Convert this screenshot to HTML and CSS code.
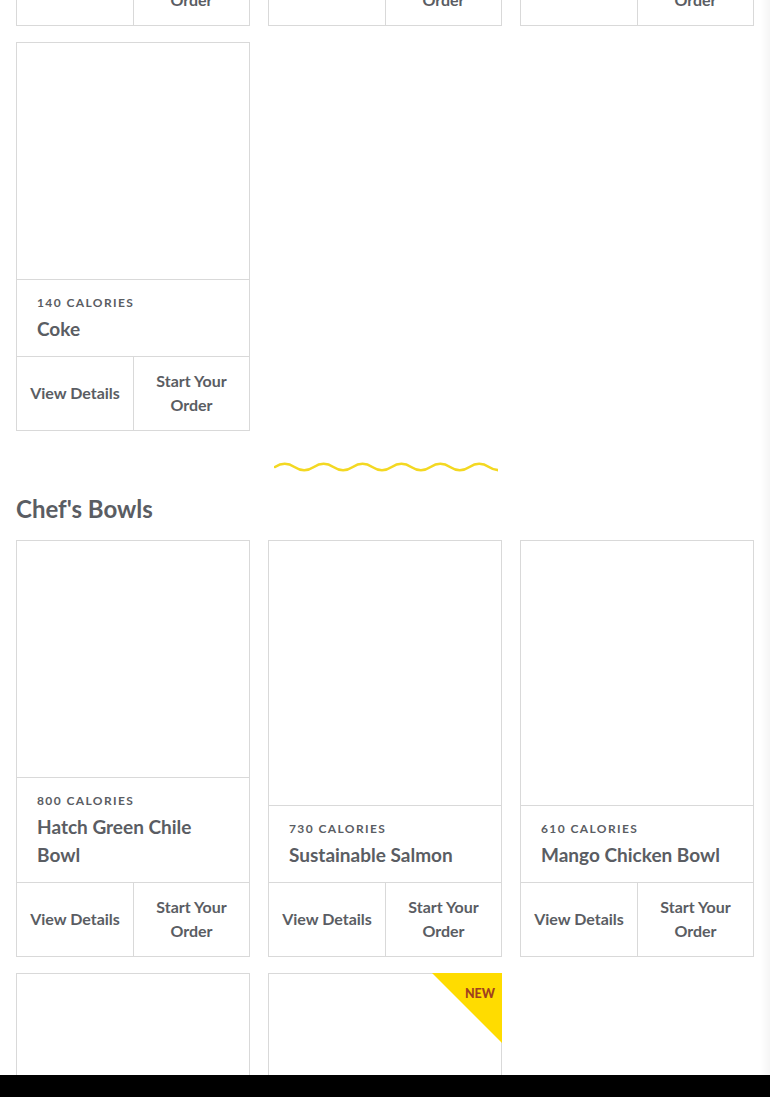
FILE: index.html
```html
<!DOCTYPE html>
<html lang="en">
<head>
<meta charset="utf-8">
<title>Menu</title>
<link rel="stylesheet" href="styles.css">
</head>
<body>
<main class="menu">
  <section class="category category-drinks">
    <div class="grid">
      <article class="card">
        <div class="card-image"></div>
        <div class="card-info"><div class="cal">150 CALORIES</div><h3 class="name">Sprite</h3></div>
        <div class="card-actions"><a class="btn">View Details</a><a class="btn">Start Your Order</a></div>
      </article>
      <article class="card">
        <div class="card-image"></div>
        <div class="card-info"><div class="cal">0 CALORIES</div><h3 class="name">Diet Coke</h3></div>
        <div class="card-actions"><a class="btn">View Details</a><a class="btn">Start Your Order</a></div>
      </article>
      <article class="card">
        <div class="card-image"></div>
        <div class="card-info"><div class="cal">120 CALORIES</div><h3 class="name">Lemonade</h3></div>
        <div class="card-actions"><a class="btn">View Details</a><a class="btn">Start Your Order</a></div>
      </article>
      <article class="card">
        <div class="card-image"></div>
        <div class="card-info"><div class="cal">140 CALORIES</div><h3 class="name">Coke</h3></div>
        <div class="card-actions"><a class="btn">View Details</a><a class="btn">Start Your Order</a></div>
      </article>
    </div>
  </section>

  <div class="divider">
    <svg width="224" height="14" viewBox="0 0 224 14" aria-hidden="true">
      <path d="M1 7 Q 10.72 0.6 20.45 7 T 39.9 7 T 59.35 7 T 78.8 7 T 98.25 7 T 117.7 7 T 137.15 7 T 156.6 7 T 176.05 7 T 195.5 7 T 214.95 7 T 234.4 7" fill="none" stroke="#f3d822" stroke-width="2.6" stroke-linecap="round"/>
    </svg>
  </div>

  <section class="category">
    <h2 class="category-title">Chef's Bowls</h2>
    <div class="grid">
      <article class="card">
        <div class="card-image"></div>
        <div class="card-info"><div class="cal">800 CALORIES</div><h3 class="name">Hatch Green Chile Bowl</h3></div>
        <div class="card-actions"><a class="btn">View Details</a><a class="btn">Start Your Order</a></div>
      </article>
      <article class="card">
        <div class="card-image"></div>
        <div class="card-info"><div class="cal">730 CALORIES</div><h3 class="name">Sustainable Salmon</h3></div>
        <div class="card-actions"><a class="btn">View Details</a><a class="btn">Start Your Order</a></div>
      </article>
      <article class="card">
        <div class="card-image"></div>
        <div class="card-info"><div class="cal">610 CALORIES</div><h3 class="name">Mango Chicken Bowl</h3></div>
        <div class="card-actions"><a class="btn">View Details</a><a class="btn">Start Your Order</a></div>
      </article>
      <article class="card">
        <div class="card-image"></div>
        <div class="card-info"><div class="cal">650 CALORIES</div><h3 class="name">Chipotle Chicken Bowl</h3></div>
        <div class="card-actions"><a class="btn">View Details</a><a class="btn">Start Your Order</a></div>
      </article>
      <article class="card">
        <span class="badge-new"><span class="badge-text">NEW</span></span>
        <div class="card-image"></div>
        <div class="card-info"><div class="cal">590 CALORIES</div><h3 class="name">Korean BBQ Bowl</h3></div>
        <div class="card-actions"><a class="btn">View Details</a><a class="btn">Start Your Order</a></div>
      </article>
    </div>
  </section>
</main>
<div class="bottom-bar"></div>
<div class="edge-shade"></div>
</body>
</html>
```

FILE: styles.css
```css
html, body {
  margin: 0;
  padding: 0;
  background: #ffffff;
}

body {
  font-family: Lato, "Open Sans", "Liberation Sans", sans-serif;
  color: #5a5d63;
  overflow: hidden;
}

.menu {
  padding: 0 16px;
  margin-top: -363px;
}

.grid {
  display: grid;
  grid-template-columns: repeat(3, 234px);
  column-gap: 18px;
  row-gap: 16px;
}

.card {
  position: relative;
  display: flex;
  flex-direction: column;
  border: 1px solid #d9d9d9;
  background: #fff;
}

.card-image {
  flex: 1 0 236px;
  min-height: 236px;
}

.card-info {
  border-top: 1px solid #d9d9d9;
  padding: 15px 20px 13px;
}

.cal {
  font-size: 12px;
  line-height: 16px;
  font-weight: 700;
  letter-spacing: 1.4px;
  color: #5a5d63;
}

.name {
  margin: 4px 0 0;
  font-size: 19px;
  line-height: 28px;
  font-weight: 700;
  color: #5a5d63;
}

.card-actions {
  display: grid;
  grid-template-columns: 1fr 1fr;
  border-top: 1px solid #d9d9d9;
  height: 73px;
}

.btn {
  display: flex;
  align-items: center;
  justify-content: center;
  text-align: center;
  padding: 0 12px 2px;
  font-size: 16px;
  line-height: 24px;
  font-weight: 700;
  color: #5a5d63;
}

.btn + .btn {
  border-left: 1px solid #d9d9d9;
}

.divider {
  display: flex;
  justify-content: center;
  margin-top: 29px;
  height: 14px;
  padding-left: 2px;
}

.divider svg {
  display: block;
}

.category-title {
  margin: 20px 0 16px;
  font-size: 24px;
  line-height: 30px;
  font-weight: 700;
  color: #5a5d63;
}

.badge-new {
  position: absolute;
  top: -1px;
  right: -1px;
  width: 70px;
  height: 70px;
  background: #ffdc00;
  clip-path: polygon(0 0, 100% 0, 100% 100%);
}

.badge-text {
  position: absolute;
  top: 13px;
  right: 7px;
  font-size: 12.5px;
  line-height: 16px;
  font-weight: 900;
  color: #a0401f;
}

.bottom-bar {
  position: fixed;
  left: 0;
  right: 0;
  bottom: 0;
  height: 22px;
  background: #000;
}

.edge-shade {
  position: fixed;
  top: 0;
  right: 0;
  bottom: 22px;
  width: 9px;
  background: linear-gradient(to right, rgba(0,0,0,0), rgba(0,0,0,0.04));
}
```
